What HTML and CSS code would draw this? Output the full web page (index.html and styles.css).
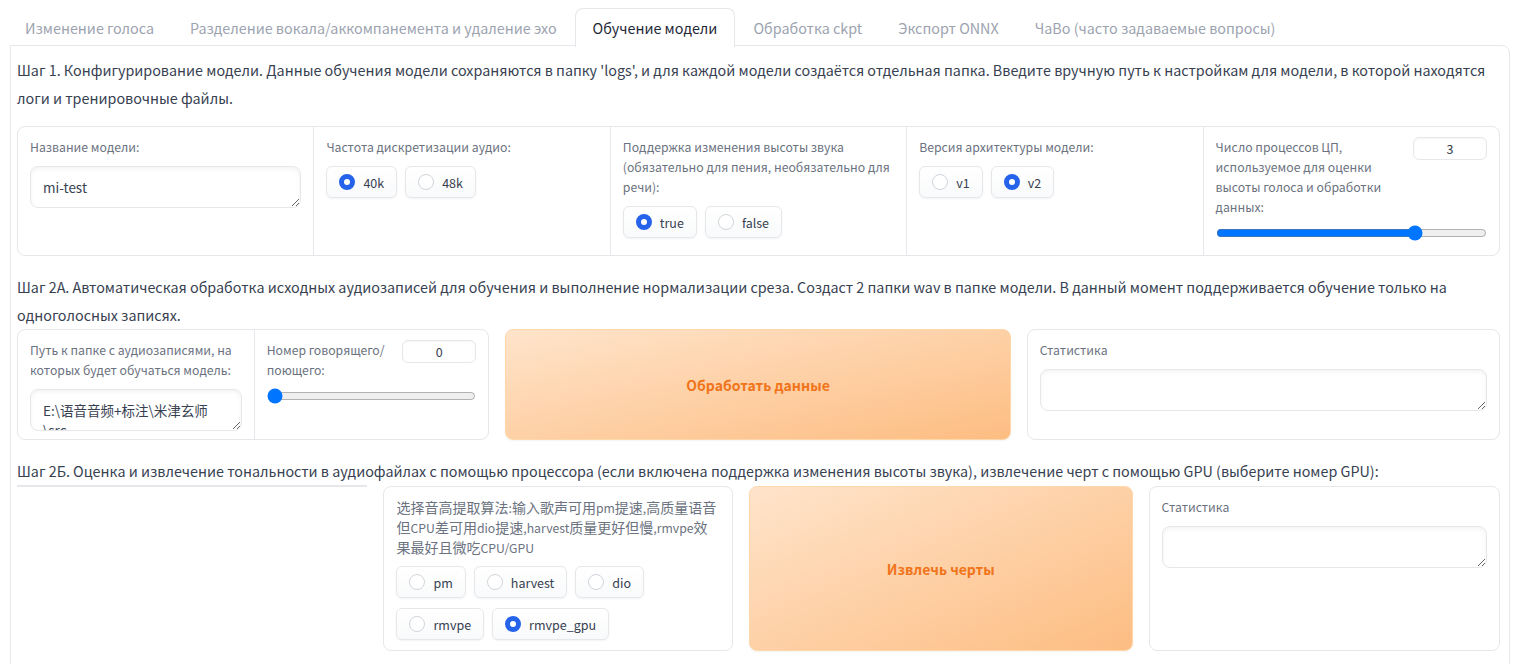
FILE: index.html
```html
<!DOCTYPE html>
<html lang="ru">
<head>
    <meta charset="UTF-8">
    <meta name="viewport" content="width=device-width, initial-scale=1.0">
    <title>Обучение модели</title>
    <link rel="stylesheet" href="styles.css">
</head>
<body>
    <div class="tabs">
        <div class="tab-nav">
            <button class="tab">Изменение голоса</button>
            <button class="tab">Разделение вокала/аккомпанемента и удаление эхо</button>
            <button class="tab selected">Обучение модели</button>
            <button class="tab">Обработка ckpt</button>
            <button class="tab">Экспорт ONNX</button>
            <button class="tab">ЧаВо (часто задаваемые вопросы)</button>
        </div>

        <div class="tab-panel">
            <div class="md md-step1">
                Шаг 1. Конфигурирование модели. Данные обучения модели сохраняются в папку 'logs', и для каждой модели создаётся отдельная папка. Введите вручную путь к настройкам для модели, в которой находятся логи и тренировочные файлы.
            </div>

            <div class="form row-step1">
                <div class="field">
                    <label class="label">Название модели:</label>
                    <textarea class="textbox" rows="1">mi-test</textarea>
                </div>
                <div class="field">
                    <label class="label">Частота дискретизации аудио:</label>
                    <div class="radio-group">
                        <label class="radio"><input type="radio" name="sr" checked> 40k</label>
                        <label class="radio"><input type="radio" name="sr"> 48k</label>
                    </div>
                </div>
                <div class="field">
                    <label class="label">Поддержка изменения высоты звука (обязательно для пения, необязательно для речи):</label>
                    <div class="radio-group">
                        <label class="radio"><input type="radio" name="f0" checked> true</label>
                        <label class="radio"><input type="radio" name="f0"> false</label>
                    </div>
                </div>
                <div class="field">
                    <label class="label">Версия архитектуры модели:</label>
                    <div class="radio-group">
                        <label class="radio"><input type="radio" name="ver"> v1</label>
                        <label class="radio"><input type="radio" name="ver" checked> v2</label>
                    </div>
                </div>
                <div class="field">
                    <div class="slider-head">
                        <label class="label label-cpu">Число процессов ЦП, используемое для оценки высоты голоса и обработки данных:</label>
                        <input class="number" type="number" value="3">
                    </div>
                    <input class="slider" type="range" min="0" max="4" step="1" value="3">
                </div>
            </div>

            <div class="md md-step2a">
                Шаг 2А. Автоматическая обработка исходных аудиозаписей для обучения и выполнение нормализации среза. Создаст 2 папки wav в папке модели. В данный момент поддерживается обучение только на одноголосных записях.
            </div>

            <div class="row row-step2a">
                <div class="form form-two">
                    <div class="field">
                        <label class="label">Путь к папке с аудиозаписями, на которых будет обучаться модель:</label>
                        <textarea class="textbox" rows="1">E:\语音音频+标注\米津玄师\src</textarea>
                    </div>
                    <div class="field">
                        <div class="slider-head">
                            <label class="label label-spk">Номер говорящего/ поющего:</label>
                            <input class="number" type="number" value="0">
                        </div>
                        <input class="slider slider-spk" type="range" min="0" max="4" step="1" value="0">
                    </div>
                </div>
                <button class="btn-primary">Обработать данные</button>
                <div class="block">
                    <label class="label">Статистика</label>
                    <textarea class="textbox" rows="2"></textarea>
                </div>
            </div>

            <div class="md md-step2b">
                Шаг 2Б. Оценка и извлечение тональности в аудиофайлах с помощью процессора (если включена поддержка изменения высоты звука), извлечение черт с помощью GPU (выберите номер GPU):
            </div>

            <div class="row row-step2b">
                <div class="spacer"></div>
                <div class="block">
                    <!-- chinese text runs larger than the latin bits -->
                    <label class="label label-cjk">选择音高提取算法<span class="lat">:</span>输入歌声可用<span class="lat">pm</span>提速<span class="lat">,</span>高质量语音但<span class="lat">CPU</span>差可用<span class="lat">dio</span>提速<span class="lat">,harvest</span>质量更好但慢<span class="lat">,rmvpe</span>效果最好且微吃<span class="lat">CPU/GPU</span></label>
                    <div class="radio-group">
                        <label class="radio"><input type="radio" name="f0m"> pm</label>
                        <label class="radio"><input type="radio" name="f0m"> harvest</label>
                        <label class="radio"><input type="radio" name="f0m"> dio</label>
                        <label class="radio"><input type="radio" name="f0m"> rmvpe</label>
                        <label class="radio"><input type="radio" name="f0m" checked> rmvpe_gpu</label>
                    </div>
                </div>
                <button class="btn-primary">Извлечь черты</button>
                <div class="block">
                    <label class="label">Статистика</label>
                    <textarea class="textbox" rows="2"></textarea>
                </div>
            </div>
        </div>
    </div>
</body>
</html>
```

FILE: styles.css
```css
body {
    margin: 0;
    font-family: "Noto Sans CJK SC", Roboto, sans-serif;
    color: #374151;
    background: #fff;
}
.tabs {
    padding: 8px 9px 0 10px;
}
.tab-nav {
    display: flex;
    margin-left: -3px;
    height: 38px;
}
.tab {
    font-family: inherit;
    font-size: 14.33px;
    line-height: 20px;
    color: #9ca3af;
    background: none;
    border: 1px solid transparent;
    border-bottom: none;
    padding: 0 17px;
    cursor: pointer;
}
.tab.selected {
    color: #1f2937;
    background: #fff;
    border-color: #e5e7eb;
    border-radius: 8px 8px 0 0;
    position: relative;
    z-index: 1;
    height: 39px;
}
.tab-panel {
    border: 1px solid #e5e7eb;
    border-radius: 0 8px 8px 8px;
    margin-top: -1px;
    padding: 10px 9px 20px 6px;
}
.md {
    font-size: 14.33px;
    line-height: 28px;
    color: #374151;
}
.md-step1 {
    margin-bottom: 14px;
}
.md-step2a {
    margin-top: 17px;
}
.md-step2b {
    margin-top: 17px;
}
.label {
    display: block;
    font-size: 12.25px;
    line-height: 20px;
    color: #6b7280;
    margin-bottom: 9px;
}
.label-cjk {
    font-size: 14px;
}
.label-cjk .lat {
    font-size: 12.25px;
    line-height: 1;
}

/* rows and forms */
.form {
    display: grid;
    gap: 1px;
    background: #e5e7eb;
    border: 1px solid #e5e7eb;
    border-radius: 8px;
    overflow: hidden;
}
.row-step1 {
    grid-template-columns: repeat(5, minmax(0, 1fr));
    height: 130px;
    box-sizing: border-box;
}
.form-two {
    grid-template-columns: minmax(0, 237fr) minmax(0, 235fr);
}
.field {
    background: #fff;
    padding: 10px 12px;
}
.row {
    display: grid;
    gap: 16px;
}
.row-step2a {
    grid-template-columns: minmax(0, 472fr) minmax(0, 505fr) minmax(0, 473fr);
    height: 111px;
}
.row-step2b {
    grid-template-columns: minmax(0, 350fr) minmax(0, 349fr) minmax(0, 383fr) minmax(0, 351fr);
    height: 164px;
    margin-top: 1px;
}
.spacer {
    border-top: 2px solid #e5e7eb;
    margin-top: -1px;
    height: 0;
}
.block {
    border: 1px solid #e5e7eb;
    border-radius: 8px;
    padding: 10px 12px;
    background: #fff;
}

/* inputs */
.textbox {
    display: block;
    width: 100%;
    box-sizing: border-box;
    height: 42px;
    padding: 10px 12px;
    font-family: inherit;
    font-size: 13.5px;
    line-height: 20px;
    color: #374151;
    border: 1px solid #e5e7eb;
    border-radius: 8px;
    box-shadow: inset 0 2px 4px rgba(0, 0, 0, 0.05);
    resize: vertical;
    overflow: hidden;
    outline: none;
}
.number {
    width: 74px;
    height: 23px;
    box-sizing: border-box;
    flex-shrink: 0;
    border: 1px solid #e5e7eb;
    border-radius: 6px;
    text-align: center;
    font-family: inherit;
    font-size: 12.5px;
    color: #374151;
    box-shadow: inset 0 1px 2px rgba(0, 0, 0, 0.04);
    -moz-appearance: textfield;
}
.number::-webkit-inner-spin-button,
.number::-webkit-outer-spin-button {
    -webkit-appearance: none;
    margin: 0;
}
.slider-head {
    display: flex;
    justify-content: space-between;
    align-items: flex-start;
    gap: 8px;
}
.label-cpu {
    width: 180px;
    margin-bottom: 8px;
}
.label-spk {
    width: 125px;
    margin-bottom: 8px;
}
.slider {
    display: block;
    width: 100%;
    margin: 0;
}

/* radio buttons */
.radio-group {
    display: flex;
    flex-wrap: wrap;
    gap: 10px 8px;
}
.radio {
    display: flex;
    align-items: center;
    gap: 8px;
    height: 32px;
    box-sizing: border-box;
    padding: 0 12px;
    border: 1px solid #e5e7eb;
    border-radius: 6px;
    background: linear-gradient(#fff, #f9fafb);
    box-shadow: 0 1px 2px rgba(0, 0, 0, 0.05);
    font-size: 12.5px;
    color: #374151;
}
.radio input {
    appearance: none;
    -webkit-appearance: none;
    margin: 0;
    width: 16px;
    height: 16px;
    box-sizing: border-box;
    border-radius: 50%;
    border: 1px solid #d1d5db;
    background: #fff;
}
.radio input:checked {
    border: 5px solid #2563eb;
}

/* big orange buttons */
.btn-primary {
    font-family: inherit;
    font-size: 14px;
    font-weight: 600;
    color: #f0741a;
    border: 1px solid #fed7aa;
    border-radius: 8px;
    background: linear-gradient(to bottom right, #ffe4cb, #fdbd82);
    box-shadow: 0 1px 2px rgba(0, 0, 0, 0.05);
    cursor: pointer;
}
```
